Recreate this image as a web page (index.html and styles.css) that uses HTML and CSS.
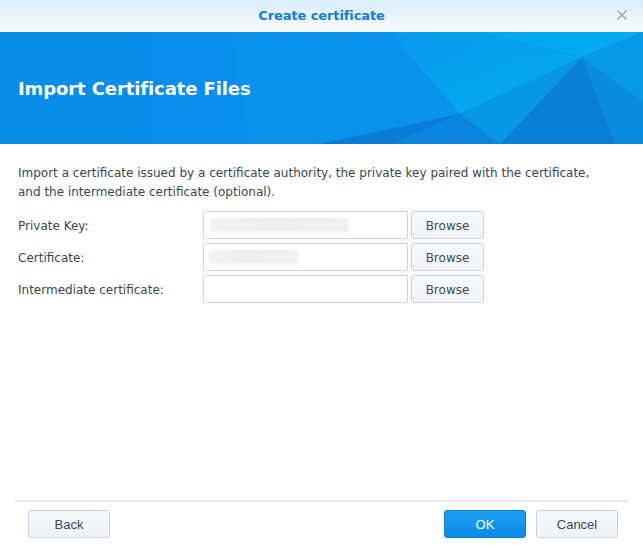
FILE: index.html
```html
<!DOCTYPE html>
<html>
<head>
<meta charset="utf-8">
<link rel="stylesheet" href="styles.css">
</head>
<body>
<div class="dialog">
  <div class="titlebar">
    <span class="title">Create certificate</span>
    <span class="close">
      <svg width="12" height="12" viewBox="0 0 12 12"><path d="M1.5 1.5 L10.5 10.5 M10.5 1.5 L1.5 10.5" stroke="#a3a8ae" stroke-width="1.6" fill="none"/></svg>
    </span>
  </div>
  <div class="banner">
    <svg class="banner-bg" width="643" height="112" viewBox="0 0 643 112" preserveAspectRatio="none">
      <defs>
        <linearGradient id="base" x1="0" y1="0" x2="1" y2="0">
          <stop offset="0" stop-color="#088ce8"/>
          <stop offset="0.45" stop-color="#0890ec"/>
          <stop offset="1" stop-color="#0896ea"/>
        </linearGradient>
        <linearGradient id="cyan" x1="0" y1="0" x2="1" y2="1">
          <stop offset="0" stop-color="#0a98ee"/>
          <stop offset="1" stop-color="#02b0f0"/>
        </linearGradient>
      </defs>
      <rect width="643" height="112" fill="url(#base)"/>
      <polygon points="230,0 390,0 460,82 300,112 250,112" fill="#0c94ee" opacity="0.6"/>
      <polygon points="390,0 582,25 460,82" fill="url(#cyan)"/>
      <polygon points="390,0 480,0 582,25" fill="#06a2ee"/>
      <polygon points="480,0 643,0 582,25" fill="#04aaf0"/>
      <polygon points="582,25 643,0 643,70" fill="#0898e8"/>
      <polygon points="582,25 643,70 643,112 615,112" fill="#0a8cde"/>
      <polygon points="582,25 615,112 500,112" fill="#0a7fd8"/>
      <polygon points="582,25 500,112 460,82" fill="#0897e6"/>
      <polygon points="460,82 500,112 390,112" fill="#0a84dc"/>
      <polygon points="460,82 390,112 320,112" fill="#0a7cd6"/>
    </svg>
    <h1 class="banner-title">Import Certificate Files</h1>
  </div>
  <div class="content">
    <p class="desc">Import a certificate issued by a certificate authority, the private key paired with the certificate,<br>and the intermediate certificate (optional).</p>
    <div class="form">
      <div class="row">
        <label class="label">Private Key:</label>
        <div class="field"><span class="redact r1"></span></div>
        <button class="browse">Browse</button>
      </div>
      <div class="row">
        <label class="label">Certificate:</label>
        <div class="field"><span class="redact r2"></span></div>
        <button class="browse">Browse</button>
      </div>
      <div class="row">
        <label class="label">Intermediate certificate:</label>
        <div class="field"></div>
        <button class="browse">Browse</button>
      </div>
    </div>
  </div>
  <div class="footer">
    <div class="buttons">
      <button class="btn">Back</button>
      <div class="spacer"></div>
      <button class="btn primary">OK</button>
      <button class="btn">Cancel</button>
    </div>
  </div>
</div>
</body>
</html>
```

FILE: styles.css
```css
html, body {
  margin: 0;
  padding: 0;
  background: #ffffff;
}

.dialog {
  width: 643px;
  height: 545px;
  display: flex;
  flex-direction: column;
  font-family: "DejaVu Sans", Verdana, sans-serif;
  font-size: 12px;
  color: #3b4550;
  overflow: hidden;
}

.titlebar {
  height: 32px;
  flex: none;
  display: flex;
  align-items: center;
  justify-content: center;
  position: relative;
  background: linear-gradient(to bottom, #d9ebfa 0%, #eaf4fc 50%, #f8fbfe 100%);
}

.title {
  font-family: "DejaVu Sans", Verdana, sans-serif;
  font-weight: bold;
  font-size: 13px;
  letter-spacing: -0.1px;
  color: #0b7fdd;
  margin-top: -2px;
}

.close {
  position: absolute;
  right: 15px;
  top: 9px;
  width: 12px;
  height: 12px;
  display: flex;
}

.banner {
  height: 112px;
  flex: none;
  position: relative;
  display: flex;
  align-items: center;
  background: #088ce8;
}

.banner-bg {
  position: absolute;
  left: 0;
  top: 0;
}

.banner-title {
  position: relative;
  margin: 0 0 0 18px;
  font-family: "DejaVu Sans", Verdana, sans-serif;
  font-weight: bold;
  font-size: 18px;
  letter-spacing: -0.1px;
  color: #ffffff;
  margin-top: 1px;
}

.content {
  flex: 1;
  padding: 20px 18px 0 18px;
}

.desc {
  margin: 0;
  line-height: 19px;
  color: #3b4550;
}

.form {
  margin-top: 9px;
  display: flex;
  flex-direction: column;
  gap: 4px;
}

.row {
  display: flex;
  align-items: center;
  height: 28px;
}

.label {
  width: 185px;
  flex: none;
  color: #3b4550;
  padding-top: 1px;
}

.field {
  width: 203px;
  height: 26px;
  border: 1px solid #c9d1db;
  border-radius: 2px;
  background: #fff;
  position: relative;
  flex: none;
}

.redact {
  position: absolute;
  top: 6px;
  height: 14px;
  background: linear-gradient(to right, #f1f2f5, #eceef1 40%, #eff0f3);
  filter: blur(1px);
}

.r1 {
  left: 6px;
  width: 139px;
}

.r2 {
  left: 4px;
  width: 90px;
}

.browse {
  margin-left: 3px;
  width: 73px;
  height: 28px;
  border: 1px solid #c6d0dc;
  border-radius: 3px;
  background: linear-gradient(to bottom, #f6f9fc, #eef3f8);
  font-family: "DejaVu Sans", Verdana, sans-serif;
  font-size: 12px;
  color: #414b57;
  padding: 1px 0 0 0;
}

.footer {
  flex: none;
  padding: 0 15px 7px 15px;
}

.buttons {
  border-top: 2px solid #e4e7eb;
  padding: 8px 10px 0 13px;
  display: flex;
  gap: 10px;
}

.spacer {
  flex: 1;
}

.btn {
  width: 82px;
  height: 28px;
  border: 1px solid #c6d0dc;
  border-radius: 3px;
  background: linear-gradient(to bottom, #f6f9fc, #edf2f7);
  font-family: "Liberation Sans", Arial, sans-serif;
  font-size: 13px;
  color: #3e4753;
  padding: 0;
}

.btn.primary {
  background: linear-gradient(to bottom, #1f9ff3, #0a8ae9);
  border-color: #0a7fd8;
  color: #ffffff;
}
```
